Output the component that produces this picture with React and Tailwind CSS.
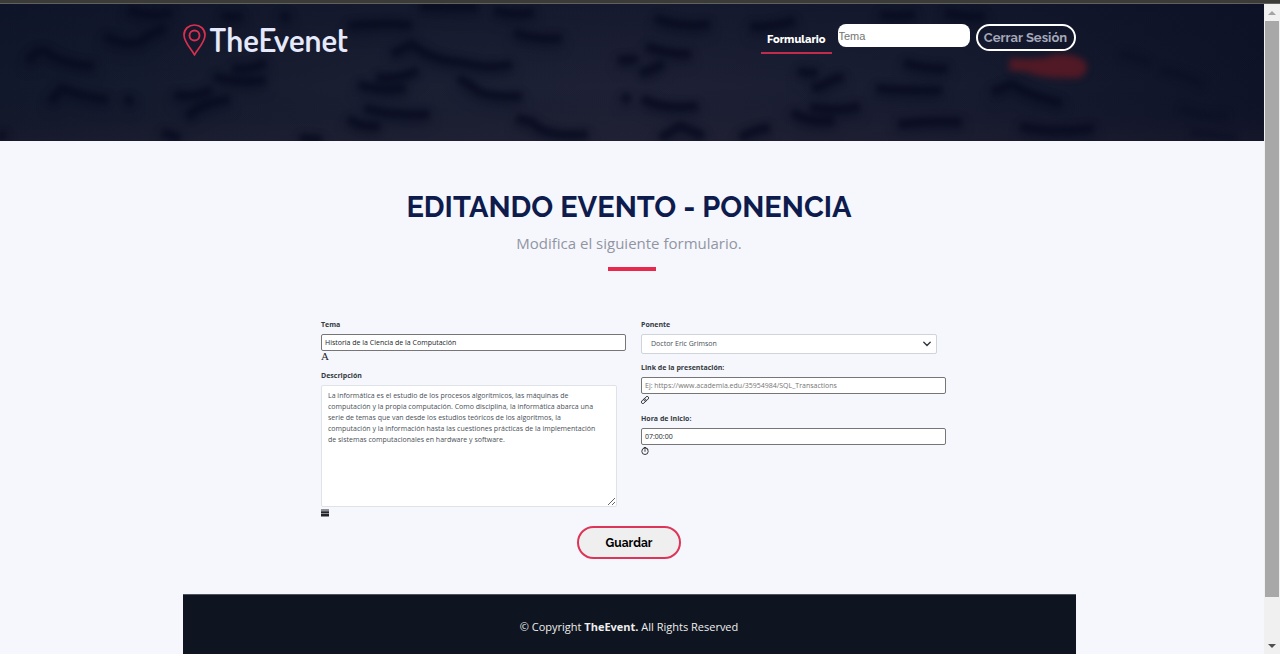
import React from "react";

const ridges = [
  "M28 58 Q36 44 46 47 Q60 60 94 62",
  "M104 32 Q125 42 140 38 Q150 28 166 24",
  "M128 5 Q150 14 172 8",
  "M50 98 L62 84 Q80 92 108 96",
  "M126 92 L132 100",
  "M174 90 Q190 96 212 85",
  "M188 114 Q195 100 230 95",
  "M214 72 Q235 80 266 76",
  "M232 64 Q250 67 266 58",
  "M162 128 L180 134",
  "M300 134 L322 136",
  "M0 128 L4 134",
  "M222 10 Q230 16 242 11",
  "M280 12 L290 13",
  "M348 22 Q380 18 412 21",
  "M358 80 Q380 88 406 84",
  "M376 73 Q400 76 418 66",
  "M348 114 Q360 124 380 122",
  "M364 104 Q390 112 430 110",
  "M392 50 L412 40 Q430 56 460 58 Q490 66 512 60",
  "M458 74 L472 82 Q480 94 522 92",
  "M516 114 L532 118 Q545 134 588 130",
  "M494 6 Q512 12 534 8",
  "M514 28 Q530 36 562 34",
  "M420 2 L478 3",
  "M618 56 L638 55",
  "M622 92 L630 96",
  "M655 14 Q680 24 710 20",
  "M750 22 Q770 24 795 16",
  "M646 42 Q666 50 691 50",
  "M640 70 L664 60",
  "M642 94 Q660 106 698 102",
  "M798 66 Q806 70 818 68",
  "M812 84 L822 82 Q832 74 844 73",
  "M792 108 Q810 120 834 116",
  "M810 103 Q840 108 860 102",
  "M904 58 Q925 66 948 64",
  "M876 84 Q900 87 942 86",
  "M898 120 Q930 116 962 118",
  "M992 88 L1012 80 Q1030 92 1062 99",
  "M1020 122 Q1050 130 1094 124",
  "M660 134 L680 122 L704 132",
  "M740 134 Q755 124 770 124",
  "M880 10 Q895 14 915 10",
  "M945 8 Q965 14 985 12",
];

const faintRidges = [
  "M1120 50 Q1140 54 1150 60",
  "M1160 66 Q1185 70 1204 82",
  "M1180 104 Q1200 114 1228 112",
  "M1190 128 L1236 134",
];

function HeroBackdrop() {
  return (
    <svg
      className="absolute inset-0 h-full w-full"
      viewBox="0 0 1264 137"
      preserveAspectRatio="none"
      aria-hidden="true"
    >
      <defs>
        <linearGradient id="sky" x1="0" x2="1" y1="0" y2="0">
          <stop offset="0" stopColor="#12182b" />
          <stop offset="0.3" stopColor="#1a1f32" />
          <stop offset="0.5" stopColor="#1e2135" />
          <stop offset="0.72" stopColor="#191d31" />
          <stop offset="1" stopColor="#0e1327" />
        </linearGradient>
        <linearGradient id="shade" x1="0" x2="0" y1="0" y2="1">
          <stop offset="0" stopColor="#0a0f24" stopOpacity="0.4" />
          <stop offset="0.6" stopColor="#0a0f24" stopOpacity="0" />
          <stop offset="1" stopColor="#2a2034" stopOpacity="0.25" />
        </linearGradient>
        <filter id="soft" x="-5%" y="-20%" width="110%" height="140%" colorInterpolationFilters="sRGB">
          <feGaussianBlur stdDeviation="3" />
        </filter>
        <filter id="wash" x="-5%" y="-20%" width="110%" height="140%" colorInterpolationFilters="sRGB">
          <feGaussianBlur stdDeviation="6" />
        </filter>
        <filter id="glow" x="-30%" y="-60%" width="160%" height="260%" colorInterpolationFilters="sRGB">
          <feGaussianBlur stdDeviation="3" />
        </filter>
      </defs>
      <rect width="1264" height="137" fill="url(#sky)" />
      <rect width="1264" height="137" fill="url(#shade)" />
      <g fill="none" stroke="#0a0e24" strokeWidth="10" strokeOpacity="0.4" transform="translate(0 6)" filter="url(#wash)">
        {ridges.map((d) => (
          <path key={d} d={d} />
        ))}
      </g>
      <g fill="none" stroke="#080c20" strokeWidth="9" filter="url(#soft)">
        {ridges.map((d) => (
          <path key={d} d={d} strokeOpacity="0.85" />
        ))}
        {faintRidges.map((d) => (
          <path key={d} d={d} strokeOpacity="0.4" />
        ))}
      </g>
      <path
        d="M1010 54 Q1040 57 1056 50 Q1084 50 1087 62 Q1086 76 1070 74 Q1040 74 1028 68 L1009 66 Z"
        fill="#581925"
        fillOpacity="0.9"
        filter="url(#glow)"
      />
    </svg>
  );
}

function PinIcon() {
  return (
    <svg className="h-8 w-6" viewBox="0 0 24 32" fill="none" stroke="#d92f50" aria-hidden="true">
      <path
        d="M11.5 31 C9.5 26.5 1 18.5 1 11 C1 5 5.8 1 11.5 1 S22 5 22 11 C22 18.5 13.5 26.5 11.5 31 Z"
        strokeWidth="1.7"
        strokeLinejoin="round"
      />
      <circle cx="11.5" cy="11.5" r="5" strokeWidth="1.9" />
    </svg>
  );
}

function LinkIcon() {
  return (
    <svg className="h-2 w-2" viewBox="0 0 16 16" fill="none" stroke="#212529" strokeWidth="1.7" aria-hidden="true">
      <rect x="5" y="2.6" width="11" height="6" rx="3" transform="rotate(-45 10.5 5.6)" />
      <rect x="0" y="7.4" width="11" height="6" rx="3" transform="rotate(-45 5.5 10.4)" />
    </svg>
  );
}

function ClockIcon() {
  return (
    <svg className="h-2 w-2" viewBox="0 0 16 16" fill="none" stroke="#212529" strokeWidth="1.8" aria-hidden="true">
      <circle cx="8" cy="8.6" r="6.4" />
      <path d="M5.5 1 H10.5 M8 4.5 V9.5 M13 3 L14.5 4.5" />
    </svg>
  );
}

function BarsIcon() {
  return (
    <svg className="h-2 w-2" viewBox="0 0 8 8" fill="#212529" aria-hidden="true">
      <path d="M0 .5h8v1H0zM0 2.2h8v2.4H0zM0 5h8v2.5H0z" />
    </svg>
  );
}

function Field({ id, label, icon, children }) {
  return (
    <div className="mb-2 flex flex-col items-start">
      <label htmlFor={id} className="mb-[3px] text-[7px] leading-3 font-bold text-[#343a40]">
        {label}
      </label>
      {children}
      {icon && <span className="flex h-[11px] items-center">{icon}</span>}
    </div>
  );
}

const boxStyle =
  "h-[17px] w-[calc(100%+9px)] rounded-[2px] border border-[#767676] bg-white px-[3px] text-[7px] placeholder:text-[#757575] outline-none";

function EventForm() {
  return (
    <form className="mx-auto mt-12 w-full max-w-[616px]" onSubmit={(e) => e.preventDefault()}>
      <div className="grid grid-cols-2 gap-6">
        <div>
          <Field
            id="tema"
            label="Tema"
            icon={<span className="font-['Liberation_Serif',serif] text-[11px] leading-none">A</span>}
          >
            <input id="tema" type="text" defaultValue="Historia de la Ciencia de la Computación" className={boxStyle} />
          </Field>
          <Field id="descripcion" label="Descripción" icon={<BarsIcon />}>
            <textarea
              id="descripcion"
              className="h-[122px] w-full resize rounded-[2px] border border-[#dfe3e8] bg-white py-1 pr-4 pl-1.5 text-[7px] leading-[11px] text-[#495057] outline-none"
              defaultValue="La informática es el estudio de los procesos algorítmicos, las máquinas de computación y la propia computación. Como disciplina, la informática abarca una serie de temas que van desde los estudios teóricos de los algoritmos, la computación y la información hasta las cuestiones prácticas de la implementación de sistemas computacionales en hardware y software."
            />
          </Field>
        </div>
        <div>
          <Field id="ponente" label="Ponente">
            <div className="relative w-full">
              <select
                id="ponente"
                className="block h-5 w-full appearance-none rounded-[2px] border border-[#ced4da] bg-white px-[9px] text-[7px] text-[#495057] outline-none"
              >
                <option>Doctor Eric Grimson</option>
              </select>
              <svg
                className="pointer-events-none absolute top-1.5 right-1.5 h-2 w-2"
                viewBox="0 0 8 8"
                fill="none"
                stroke="#343a40"
                strokeWidth="1.4"
                strokeLinecap="round"
                aria-hidden="true"
              >
                <path d="M.8 2.2 4 5.6 7.2 2.2" />
              </svg>
            </div>
          </Field>
          <Field id="link" label="Link de la presentación:" icon={<LinkIcon />}>
            <input
              id="link"
              type="text"
              placeholder="Ej: https://www.academia.edu/35954984/SQL_Transactions"
              className={boxStyle}
            />
          </Field>
          <Field id="hora" label="Hora de Inicio:" icon={<ClockIcon />}>
            <input id="hora" type="text" defaultValue="07:00:00" className={boxStyle} />
          </Field>
        </div>
      </div>
      <div className="flex justify-center">
        <button
          type="submit"
          className="h-[33px] w-[104px] rounded-full border-2 border-[#dc3557] bg-[#efefef] font-['Raleway',sans-serif] text-xs font-bold text-black"
        >
          Guardar
        </button>
      </div>
    </form>
  );
}

function Scrollbar() {
  return (
    <div className="flex w-4 shrink-0 flex-col items-center bg-[#f0f0f0]" aria-hidden="true">
      <svg className="h-[17px] w-4 shrink-0" viewBox="0 0 16 17" fill="#a3a3a3">
        <path d="M4 11h8L8 7z" />
      </svg>
      <div className="w-3.5 grow-[140] bg-[#a8a8a8]" />
      <div className="grow-[10]" />
      <svg className="h-4 w-4 shrink-0" viewBox="0 0 16 16" fill="#505050">
        <path d="M4 6h8l-4 4z" />
      </svg>
    </div>
  );
}

export default function App() {
  return (
    <div className="flex min-h-screen flex-col bg-[#f6f7fd] font-['Open_Sans',sans-serif] text-[#212529]">
      <div className="h-1 shrink-0 border-b border-[#5f6060] bg-[#3b3b37]" />
      <div className="flex grow">
        <div className="flex min-w-0 grow flex-col">
          <header className="relative h-[137px] shrink-0 pr-1.5">
            <HeroBackdrop />
            <div className="relative mx-auto flex max-w-[893px] items-start justify-between pt-5">
              <a
                href="#inicio"
                className="flex items-start gap-[3px] font-['Dosis',sans-serif] text-[33px] leading-[30px] font-semibold text-[#e6e9fc]"
              >
                <PinIcon />
                TheEvenet
              </a>
              <nav className="flex items-start gap-1.5">
                <a
                  href="#formulario"
                  className="h-[30px] border-b-2 border-[#c22c4c] px-1.5 pt-1.5 font-['Raleway',sans-serif] text-[11px] leading-5 font-extrabold text-white"
                >
                  Formulario
                </a>
                <input
                  type="text"
                  aria-label="Tema"
                  placeholder="Tema"
                  className="h-[23px] w-[132px] rounded-lg bg-white pl-px font-['Liberation_Sans',sans-serif] text-[11px] placeholder:text-[#757575] outline-none"
                />
                <button
                  type="button"
                  className="h-[27px] w-[100px] rounded-full border-2 border-white font-['Raleway',sans-serif] text-[13px] leading-5 font-bold whitespace-nowrap text-[#a4a8b8]"
                >
                  Cerrar Sesión
                </button>
              </nav>
            </div>
          </header>
          <main className="flex grow flex-col">
            <div className="pt-12 pr-1.5 text-center">
              <h1 className="font-['Raleway',sans-serif] text-[29px] leading-9 font-bold text-[#0e1b4d]">
                EDITANDO EVENTO - PONENCIA
              </h1>
              <p className="mt-1.5 text-[15px] leading-6 text-[#9195a2]">Modifica el siguiente formulario.</p>
            </div>
            <span className="mx-auto mt-3 h-1 w-12 bg-[#e8294d]" />
            <div className="flex grow flex-col pr-1.5">
              <EventForm />
              <footer className="mx-auto mt-[35px] w-full max-w-[893px] grow border-t border-[#4a5560] bg-[#0f1520] pt-6 pb-3 text-center text-[11px] leading-4 text-[#eeeeee]">
                © Copyright <strong>TheEvent.</strong> All Rights Reserved
              </footer>
            </div>
          </main>
        </div>
        <Scrollbar />
      </div>
    </div>
  );
}
